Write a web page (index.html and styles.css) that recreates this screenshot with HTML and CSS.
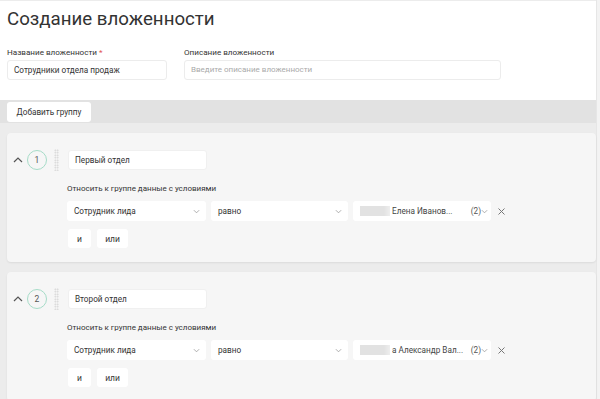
FILE: index.html
```html
<!DOCTYPE html>
<html lang="ru">
<head>
<meta charset="utf-8">
<link rel="stylesheet" href="styles.css">
</head>
<body>
<div class="page">
  <header class="header">
    <h1 class="title">Создание вложенности</h1>
    <div class="fields">
      <div class="field field-name">
        <label class="label">Название вложенности <span class="req">*</span></label>
        <div class="input">Сотрудники отдела продаж</div>
      </div>
      <div class="field field-desc">
        <label class="label">Описание вложенности</label>
        <div class="input placeholder">Введите описание вложенности</div>
      </div>
    </div>
  </header>
  <div class="toolbar">
    <button class="btn">Добавить группу</button>
  </div>
  <div class="groups">
    <section class="card">
      <div class="card-head">
        <svg class="chev" width="10" height="6" viewBox="0 0 10 6"><path d="M1 5 L5 1 L9 5" fill="none" stroke="#555" stroke-width="1.2"/></svg>
        <span class="num">1</span>
        <span class="handle"></span>
        <div class="input name">Первый отдел</div>
      </div>
      <div class="card-body">
        <div class="cond-label">Относить к группе данные с условиями</div>
        <div class="cond-row">
          <div class="select s1"><span>Сотрудник лида</span><svg class="dd" width="7" height="5" viewBox="0 0 8 5"><path d="M1 1 L4 4 L7 1" fill="none" stroke="#999" stroke-width="0.9"/></svg></div>
          <div class="select s2"><span>равно</span><svg class="dd" width="7" height="5" viewBox="0 0 8 5"><path d="M1 1 L4 4 L7 1" fill="none" stroke="#999" stroke-width="0.9"/></svg></div>
          <div class="select s3"><span class="blur"></span><span class="val">Елена Иванов...</span><span class="cnt">(2)</span><svg class="dd small" width="7" height="5" viewBox="0 0 8 5"><path d="M1 1 L4 4 L7 1" fill="none" stroke="#999" stroke-width="0.9"/></svg></div>
          <svg class="close" width="7" height="7" viewBox="0 0 7 7"><path d="M0.5 0.5 L6.5 6.5 M6.5 0.5 L0.5 6.5" stroke="#777" stroke-width="1"/></svg>
        </div>
        <div class="ops">
          <button class="op">и</button>
          <button class="op">или</button>
        </div>
      </div>
    </section>
    <section class="card">
      <div class="card-head">
        <svg class="chev" width="10" height="6" viewBox="0 0 10 6"><path d="M1 5 L5 1 L9 5" fill="none" stroke="#555" stroke-width="1.2"/></svg>
        <span class="num">2</span>
        <span class="handle"></span>
        <div class="input name">Второй отдел</div>
      </div>
      <div class="card-body">
        <div class="cond-label">Относить к группе данные с условиями</div>
        <div class="cond-row">
          <div class="select s1"><span>Сотрудник лида</span><svg class="dd" width="7" height="5" viewBox="0 0 8 5"><path d="M1 1 L4 4 L7 1" fill="none" stroke="#999" stroke-width="0.9"/></svg></div>
          <div class="select s2"><span>равно</span><svg class="dd" width="7" height="5" viewBox="0 0 8 5"><path d="M1 1 L4 4 L7 1" fill="none" stroke="#999" stroke-width="0.9"/></svg></div>
          <div class="select s3"><span class="blur"></span><span class="val">а Александр Вал...</span><span class="cnt">(2)</span><svg class="dd small" width="7" height="5" viewBox="0 0 8 5"><path d="M1 1 L4 4 L7 1" fill="none" stroke="#999" stroke-width="0.9"/></svg></div>
          <svg class="close" width="7" height="7" viewBox="0 0 7 7"><path d="M0.5 0.5 L6.5 6.5 M6.5 0.5 L0.5 6.5" stroke="#777" stroke-width="1"/></svg>
        </div>
        <div class="ops">
          <button class="op">и</button>
          <button class="op">или</button>
        </div>
      </div>
    </section>
  </div>
</div>
</body>
</html>
```
FILE: styles.css
```css
* { box-sizing: border-box; }
html, body { margin: 0; padding: 0; }
body {
  background: #f3f3f3;
  font-family: Roboto, "Liberation Sans", sans-serif;
  color: #333;
  overflow: hidden;
  height: 399px;
}
.page {
  margin-right: 3px;
  background: #ececec;
  min-height: 399px;
  border-right: 1px solid #e6e6e6;
}
.header {
  background: #fff;
  border-top: 1px solid #ececec;
  height: 100px;
  padding: 6px 7px 0 7px;
}
.title {
  margin: 0;
  font-size: 18.7px;
  font-weight: 400;
  line-height: 24px;
  color: #333;
}
.fields {
  display: flex;
  gap: 17px;
  margin-top: 16px;
}
.field { display: flex; flex-direction: column; gap: 3px; }
.field-name { width: 160px; }
.field-desc { width: 317px; }
.label {
  font-size: 8.1px;
  line-height: 10px;
  color: #333;
}
.req { color: #e25555; }
.input {
  height: 20px;
  background: #fff;
  border: 1px solid #ececec;
  border-radius: 3px;
  font-size: 8.2px;
  line-height: 18px;
  padding: 0 6px;
  color: #333;
  white-space: nowrap;
  overflow: hidden;
}
.placeholder { color: #aaa; font-size: 8px; }
.toolbar {
  background: #e2e2e2;
  height: 23px;
  padding: 2px 7px;
  display: flex;
  align-items: flex-start;
}
.btn, .op {
  font-family: inherit;
  background: #fff;
  border: none;
  border-radius: 3px;
  font-size: 8.2px;
  color: #333;
  padding: 0;
  cursor: pointer;
}
.btn { width: 84px; height: 20px; }
.groups {
  display: flex;
  flex-direction: column;
  gap: 10px;
  padding: 10px 0 0 7px;
}
.card {
  background: #f6f6f6;
  border-radius: 4px;
  box-shadow: 0 1px 2px rgba(0,0,0,0.08);
  padding: 17px 0 14px 0;
  height: 129px;
}
.card-head {
  display: flex;
  align-items: center;
  height: 20px;
}
.chev { margin-left: 6px; }
.num {
  width: 20px;
  height: 20px;
  border: 1px solid #a6dcc8;
  border-radius: 50%;
  display: flex;
  align-items: center;
  justify-content: center;
  font-size: 8.5px;
  color: #555;
  margin-left: 4px;
}
.handle {
  width: 5px;
  height: 22px;
  margin-left: 7px;
  background-image: radial-gradient(circle, #cfcfcf 0.75px, transparent 0.9px);
  background-size: 2.5px 2.5px;
}
.name { width: 139px; margin-left: 9px; border-color: #f0f0f0; }
.card-body {
  padding-left: 60px;
  margin-top: 14px;
}
.cond-label {
  font-size: 8px;
  line-height: 10px;
  color: #333;
}
.cond-row {
  display: flex;
  align-items: center;
  margin-top: 7px;
  height: 20px;
}
.select {
  height: 20px;
  background: #fff;
  border-radius: 3px;
  display: flex;
  align-items: center;
  padding: 0 6px 0 7px;
  font-size: 8.2px;
  color: #333;
  white-space: nowrap;
}
.select > span:first-child { flex: 1; }
.s1 { width: 139px; }
.s2 { width: 137px; margin-left: 5px; }
.s3 { width: 138px; margin-left: 5px; padding-right: 3px; }
.blur {
  flex: 0 0 auto !important;
  width: 30px;
  height: 10px;
  background: linear-gradient(90deg, #e2e2e2 0, #e2e2e2 80%, #eeeeee 100%);
  margin-right: 2px;
}
.val { flex: 1; color: #444; overflow: hidden; }
.cnt { color: #555; }
.dd.small { margin-left: 0; }
.close { margin-left: 7px; }
.ops {
  display: flex;
  gap: 6px;
  margin-top: 8px;
  padding-left: 1px;
}
.op { height: 19px; width: 23px; font-size: 8.5px; }
.op + .op { width: 31px; }
```
